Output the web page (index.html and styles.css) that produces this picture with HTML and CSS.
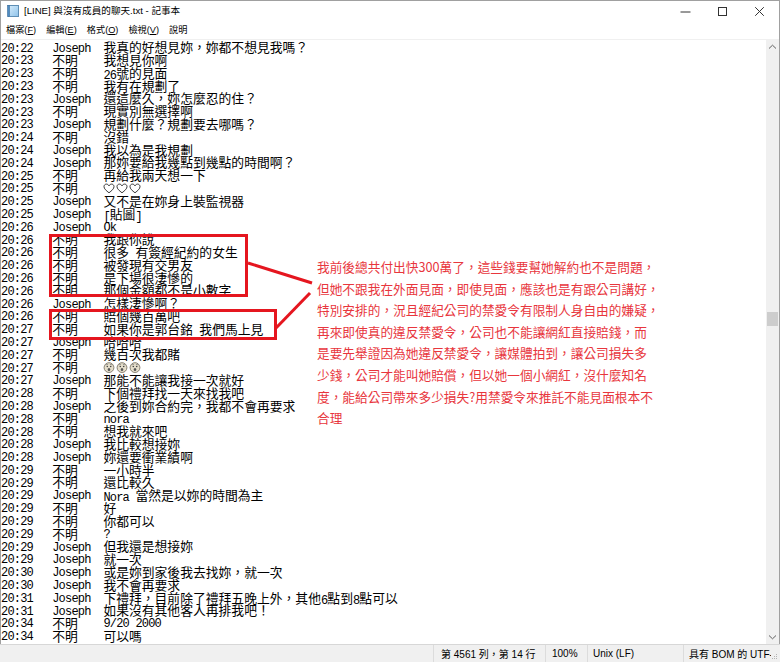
FILE: index.html
```html
<!DOCTYPE html>
<html lang="zh-Hant">
<head>
<meta charset="utf-8">
<title>記事本</title>
<link rel="stylesheet" href="styles.css">
</head>
<body>
<div class="window">
  <div class="titlebar">
    <svg class="app-icon" width="12" height="12" viewBox="0 0 12 12">
      <defs><linearGradient id="pg" x1="0" y1="0" x2="1" y2="1"><stop offset="0" stop-color="#d6ecfb"/><stop offset="1" stop-color="#8fc3ea"/></linearGradient></defs>
      <rect x="1.5" y="0.5" width="10" height="11" fill="url(#pg)" stroke="#5f8fb5" stroke-width="1"/>
      <rect x="0.5" y="0.5" width="2" height="11" fill="#4f8cc4" stroke="#3d6e9c" stroke-width="0.6"/>
    </svg>
    <span class="title">[LINE] 與沒有成員的聊天.txt - 記事本</span>
    <div class="controls">
      <span class="cbtn"><svg width="11" height="11" viewBox="0 0 11 11"><line x1="0.5" y1="6" x2="10.5" y2="6" stroke="#333" stroke-width="1"/></svg></span>
      <span class="cbtn"><svg width="11" height="11" viewBox="0 0 11 11"><rect x="1.5" y="1.5" width="8" height="8" fill="none" stroke="#333" stroke-width="1"/></svg></span>
      <span class="cbtn"><svg width="11" height="11" viewBox="0 0 11 11"><path d="M1.2 1.2 L9.8 9.8 M9.8 1.2 L1.2 9.8" stroke="#333" stroke-width="1" fill="none"/></svg></span>
    </div>
  </div>
  <div class="menubar">
    <span class="menu">檔案(<u>F</u>)</span>
    <span class="menu">編輯(<u>E</u>)</span>
    <span class="menu">格式(<u>O</u>)</span>
    <span class="menu">檢視(<u>V</u>)</span>
    <span class="menu">說明</span>
  </div>
  <div class="main">
    <div class="editor">
      <span class="m">20:22</span><span class="m">Joseph</span><span>我真的好想見妳，妳都不想見我嗎？</span>
      <span class="m">20:23</span><span>不明</span><span>我想見你啊</span>
      <span class="m">20:23</span><span>不明</span><span><span class="m">26</span>號的見面</span>
      <span class="m">20:23</span><span>不明</span><span>我有在規劃了</span>
      <span class="m">20:23</span><span class="m">Joseph</span><span>還這麼久，妳怎麼忍的住？</span>
      <span class="m">20:23</span><span>不明</span><span>現實別無選擇啊</span>
      <span class="m">20:23</span><span class="m">Joseph</span><span>規劃什麼？規劃要去哪嗎？</span>
      <span class="m">20:24</span><span>不明</span><span>沒錯</span>
      <span class="m">20:24</span><span class="m">Joseph</span><span>我以為是我規劃</span>
      <span class="m">20:24</span><span class="m">Joseph</span><span>那妳要給我幾點到幾點的時間啊？</span>
      <span class="m">20:25</span><span>不明</span><span>再給我兩天想一下</span>
      <span class="m">20:25</span><span>不明</span><span class="icons">
        <svg class="heart" width="12" height="11" viewBox="0 0 12 11"><path d="M6 9.8 C3.2 7.6 1 5.8 1 3.6 C1 2.2 2.1 1.1 3.4 1.1 C4.6 1.1 5.5 1.9 6 2.9 C6.5 1.9 7.4 1.1 8.6 1.1 C9.9 1.1 11 2.2 11 3.6 C11 5.8 8.8 7.6 6 9.8 Z" fill="none" stroke="#222" stroke-width="0.9"/></svg>
        <svg class="heart" width="12" height="11" viewBox="0 0 12 11"><path d="M6 9.8 C3.2 7.6 1 5.8 1 3.6 C1 2.2 2.1 1.1 3.4 1.1 C4.6 1.1 5.5 1.9 6 2.9 C6.5 1.9 7.4 1.1 8.6 1.1 C9.9 1.1 11 2.2 11 3.6 C11 5.8 8.8 7.6 6 9.8 Z" fill="none" stroke="#222" stroke-width="0.9"/></svg>
        <svg class="heart" width="12" height="11" viewBox="0 0 12 11"><path d="M6 9.8 C3.2 7.6 1 5.8 1 3.6 C1 2.2 2.1 1.1 3.4 1.1 C4.6 1.1 5.5 1.9 6 2.9 C6.5 1.9 7.4 1.1 8.6 1.1 C9.9 1.1 11 2.2 11 3.6 C11 5.8 8.8 7.6 6 9.8 Z" fill="none" stroke="#222" stroke-width="0.9"/></svg>
      </span>
      <span class="m">20:25</span><span class="m">Joseph</span><span>又不是在妳身上裝監視器</span>
      <span class="m">20:25</span><span class="m">Joseph</span><span><span class="m">[</span>貼圖<span class="m">]</span></span>
      <span class="m">20:26</span><span class="m">Joseph</span><span class="m">Ok</span>
      <span class="m">20:26</span><span>不明</span><span>我跟你說</span>
      <span class="m">20:26</span><span>不明</span><span>很多<span class="m"> </span>有簽經紀約的女生</span>
      <span class="m">20:26</span><span>不明</span><span>被發現有交男友</span>
      <span class="m">20:26</span><span>不明</span><span>是下場很淒慘的</span>
      <span class="m">20:26</span><span>不明</span><span>那個金額都不是小數字</span>
      <span class="m">20:26</span><span class="m">Joseph</span><span>怎樣淒慘啊？</span>
      <span class="m">20:26</span><span>不明</span><span>賠個幾百萬吧</span>
      <span class="m">20:27</span><span>不明</span><span>如果你是郭台銘<span class="m"> </span>我們馬上見</span>
      <span class="m">20:27</span><span class="m">Joseph</span><span>哈哈哈</span>
      <span class="m">20:27</span><span>不明</span><span>幾百次我都賭</span>
      <span class="m">20:27</span><span>不明</span><span class="icons">
        <svg class="face" width="12" height="11" viewBox="0 0 12 11"><circle cx="6" cy="5.6" r="4.9" fill="#e6dfcc" stroke="#7d7668" stroke-width="0.9"/><circle cx="4.3" cy="4.5" r="0.8" fill="#444"/><circle cx="7.7" cy="4.5" r="0.8" fill="#444"/><ellipse cx="6" cy="7.5" rx="1.3" ry="1.5" fill="#555"/><path d="M2.7 3.1 Q4 1.9 5.1 2.7 M6.9 2.7 Q8 1.9 9.3 3.1" stroke="#666" stroke-width="0.6" fill="none"/></svg>
        <svg class="face" width="12" height="11" viewBox="0 0 12 11"><circle cx="6" cy="5.6" r="4.9" fill="#e6dfcc" stroke="#7d7668" stroke-width="0.9"/><circle cx="4.3" cy="4.5" r="0.8" fill="#444"/><circle cx="7.7" cy="4.5" r="0.8" fill="#444"/><ellipse cx="6" cy="7.5" rx="1.3" ry="1.5" fill="#555"/><path d="M2.7 3.1 Q4 1.9 5.1 2.7 M6.9 2.7 Q8 1.9 9.3 3.1" stroke="#666" stroke-width="0.6" fill="none"/></svg>
        <svg class="face" width="12" height="11" viewBox="0 0 12 11"><circle cx="6" cy="5.6" r="4.9" fill="#e6dfcc" stroke="#7d7668" stroke-width="0.9"/><circle cx="4.3" cy="4.5" r="0.8" fill="#444"/><circle cx="7.7" cy="4.5" r="0.8" fill="#444"/><ellipse cx="6" cy="7.5" rx="1.3" ry="1.5" fill="#555"/><path d="M2.7 3.1 Q4 1.9 5.1 2.7 M6.9 2.7 Q8 1.9 9.3 3.1" stroke="#666" stroke-width="0.6" fill="none"/></svg>
      </span>
      <span class="m">20:27</span><span class="m">Joseph</span><span>那能不能讓我接一次就好</span>
      <span class="m">20:28</span><span>不明</span><span>下個禮拜找一天來找我吧</span>
      <span class="m">20:28</span><span class="m">Joseph</span><span>之後到妳合約完，我都不會再要求</span>
      <span class="m">20:28</span><span>不明</span><span class="m">nora</span>
      <span class="m">20:28</span><span>不明</span><span>想我就來吧</span>
      <span class="m">20:28</span><span class="m">Joseph</span><span>我比較想接妳</span>
      <span class="m">20:28</span><span class="m">Joseph</span><span>妳還要衝業績啊</span>
      <span class="m">20:29</span><span>不明</span><span>一小時半</span>
      <span class="m">20:29</span><span>不明</span><span>還比較久</span>
      <span class="m">20:29</span><span class="m">Joseph</span><span><span class="m">Nora </span>當然是以妳的時間為主</span>
      <span class="m">20:29</span><span>不明</span><span>好</span>
      <span class="m">20:29</span><span>不明</span><span>你都可以</span>
      <span class="m">20:29</span><span>不明</span><span class="m">?</span>
      <span class="m">20:29</span><span class="m">Joseph</span><span>但我還是想接妳</span>
      <span class="m">20:29</span><span class="m">Joseph</span><span>就一次</span>
      <span class="m">20:30</span><span class="m">Joseph</span><span>或是妳到家後我去找妳，就一次</span>
      <span class="m">20:30</span><span class="m">Joseph</span><span>我不會再要求</span>
      <span class="m">20:31</span><span class="m">Joseph</span><span>下禮拜，目前除了禮拜五晚上外，其他<span class="m">6</span>點到<span class="m">8</span>點可以</span>
      <span class="m">20:31</span><span class="m">Joseph</span><span>如果沒有其他客人再排我吧！</span>
      <span class="m">20:34</span><span>不明</span><span class="m">9/20 2000</span>
      <span class="m">20:34</span><span>不明</span><span>可以嗎</span>
    </div>
    <div class="vscroll">
      <svg class="arrow" width="9" height="6" viewBox="0 0 9 6"><path d="M1 4.5 L4.5 1.2 L8 4.5" stroke="#606060" stroke-width="1" fill="none"/></svg>
      <div class="track"><div class="thumb"></div></div>
      <svg class="arrow" width="9" height="6" viewBox="0 0 9 6"><path d="M1 1.5 L4.5 4.8 L8 1.5" stroke="#606060" stroke-width="1" fill="none"/></svg>
    </div>
  </div>
  <div class="statusbar">
    <span class="sfield f0"></span>
    <span class="sfield f1">第 4561 列，第 14 行</span>
    <span class="sfield f2">100%</span>
    <span class="sfield f3">Unix (LF)</span>
    <span class="sfield f4">具有 BOM 的 UTF-8</span>
    <svg class="grip" width="7" height="7" viewBox="0 0 7 7"><g fill="#b4b4b4"><rect x="5" y="1" width="1" height="1"/><rect x="3" y="3" width="1" height="1"/><rect x="5" y="3" width="1" height="1"/><rect x="1" y="5" width="1" height="1"/><rect x="3" y="5" width="1" height="1"/><rect x="5" y="5" width="1" height="1"/></g></svg>
  </div>

  <svg class="marks" width="780" height="662" viewBox="0 0 780 662">
    <rect x="50.5" y="235.5" width="196" height="60" fill="none" stroke="#e5161f" stroke-width="3"/>
    <rect x="50.5" y="310.5" width="225" height="28" fill="none" stroke="#e5161f" stroke-width="3"/>
    <line x1="248" y1="263" x2="312" y2="283" stroke="#e5161f" stroke-width="3"/>
    <line x1="310" y1="293" x2="276" y2="328" stroke="#e5161f" stroke-width="3"/>
  </svg>
  <div class="note">我前後總共付出快300萬了，這些錢要幫她解約也不是問題，<br>但她不跟我在外面見面，即使見面，應該也是有跟公司講好，<br>特別安排的，況且經紀公司的禁愛令有限制人身自由的嫌疑，<br>再來即使真的違反禁愛令，公司也不能讓網紅直接賠錢，而<br>是要先舉證因為她違反禁愛令，讓媒體拍到，讓公司損失多<br>少錢，公司才能叫她賠償，但以她一個小網紅，沒什麼知名<br>度，能給公司帶來多少損失?用禁愛令來推託不能見面根本不<br>合理</div>
</div>
</body>
</html>
```

FILE: styles.css
```css
html, body {
  margin: 0;
  padding: 0;
  background: #ffffff;
}

.window {
  position: relative;
  width: 780px;
  height: 662px;
  background: #ffffff;
  outline: 1px solid #a0a0a0;
  outline-offset: -1px;
  overflow: hidden;
  display: flex;
  flex-direction: column;
  font-family: "Liberation Sans", "Noto Sans CJK TC", sans-serif;
}

.titlebar {
  height: 22px;
  display: flex;
  align-items: center;
  flex: none;
}

.app-icon {
  margin-left: 7px;
  margin-right: 5px;
  flex: none;
}

.title {
  font-size: 9.6px;
  color: #000;
  line-height: 22px;
  font-family: "Liberation Sans", "Noto Sans CJK TC", sans-serif;
}

.controls {
  margin-left: auto;
  margin-right: 2px;
  display: flex;
  height: 22px;
}

.cbtn {
  width: 37px;
  height: 22px;
  display: flex;
  align-items: center;
  justify-content: center;
}

.menubar {
  height: 17px;
  display: flex;
  align-items: center;
  gap: 10px;
  padding-left: 6px;
  flex: none;
}

.menu {
  font-size: 9.2px;
  color: #000;
  line-height: 17px;
  font-family: "Liberation Sans", "Noto Sans CJK TC", sans-serif;
}

.menu u {
  text-underline-offset: 1px;
}

.main {
  flex: none;
  height: 605px;
  display: flex;
  border-top: 1px solid #f0f0f0;
  box-sizing: border-box;
}

.editor {
  flex: 1;
  padding: 1.3px 0 0 1px;
  display: grid;
  grid-template-columns: 51.2px 51.2px 1fr;
  grid-auto-rows: 12.8px;
  align-content: start;
  font-family: "Noto Sans CJK TC", sans-serif;
  font-size: 12.8px;
  line-height: 12.8px;
  color: #000;
  overflow: hidden;
  white-space: pre;
}

.m {
  font-family: "Liberation Mono", monospace;
  font-size: 12px;
  letter-spacing: -0.8px;
  position: relative;
  top: 1.3px;
}

.icons {
  display: flex;
  align-items: center;
  gap: 1px;
  padding-top: 0.5px;
}

.heart,
.face {
  flex: none;
}

.vscroll {
  width: 14px;
  flex: none;
  background: #f0f0f0;
  display: flex;
  flex-direction: column;
  align-items: center;
  padding: 4px 1px 4px 0;
  box-sizing: border-box;
}

.arrow {
  flex: none;
}

.track {
  flex: 1;
  width: 100%;
  display: flex;
  flex-direction: column;
  padding-top: 262px;
  box-sizing: border-box;
}

.thumb {
  width: 11px;
  height: 14px;
  margin-left: 1px;
  background: #cdcdcd;
}

.statusbar {
  flex: 1;
  background: #f0f0f0;
  border-top: 1px solid #d7d7d7;
  display: flex;
  align-items: stretch;
  font-family: "Liberation Sans", "Noto Sans CJK TC", sans-serif;
  font-size: 10px;
  color: #000;
  position: relative;
}

.sfield {
  display: flex;
  align-items: center;
  white-space: nowrap;
  overflow: hidden;
  box-sizing: border-box;
}

.f0 {
  width: 433px;
}

.f1 {
  width: 112px;
  padding-left: 7px;
  border-left: 1px solid #dcdcdc;
}

.f2 {
  width: 42px;
  padding-left: 6px;
  border-left: 1px solid #dcdcdc;
}

.f3 {
  width: 96px;
  padding-left: 5px;
  border-left: 1px solid #dcdcdc;
}

.f4 {
  width: 88px;
  padding-left: 5px;
  border-left: 1px solid #dcdcdc;
}

.grip {
  position: absolute;
  right: 2px;
  bottom: 2px;
}

.marks {
  position: absolute;
  left: 0;
  top: 0;
  pointer-events: none;
}

.note {
  position: absolute;
  left: 317px;
  top: 256px;
  font-family: "Noto Sans CJK TC", sans-serif;
  font-size: 12.7px;
  line-height: 21.6px;
  color: #e8363d;
  white-space: nowrap;
}
```
